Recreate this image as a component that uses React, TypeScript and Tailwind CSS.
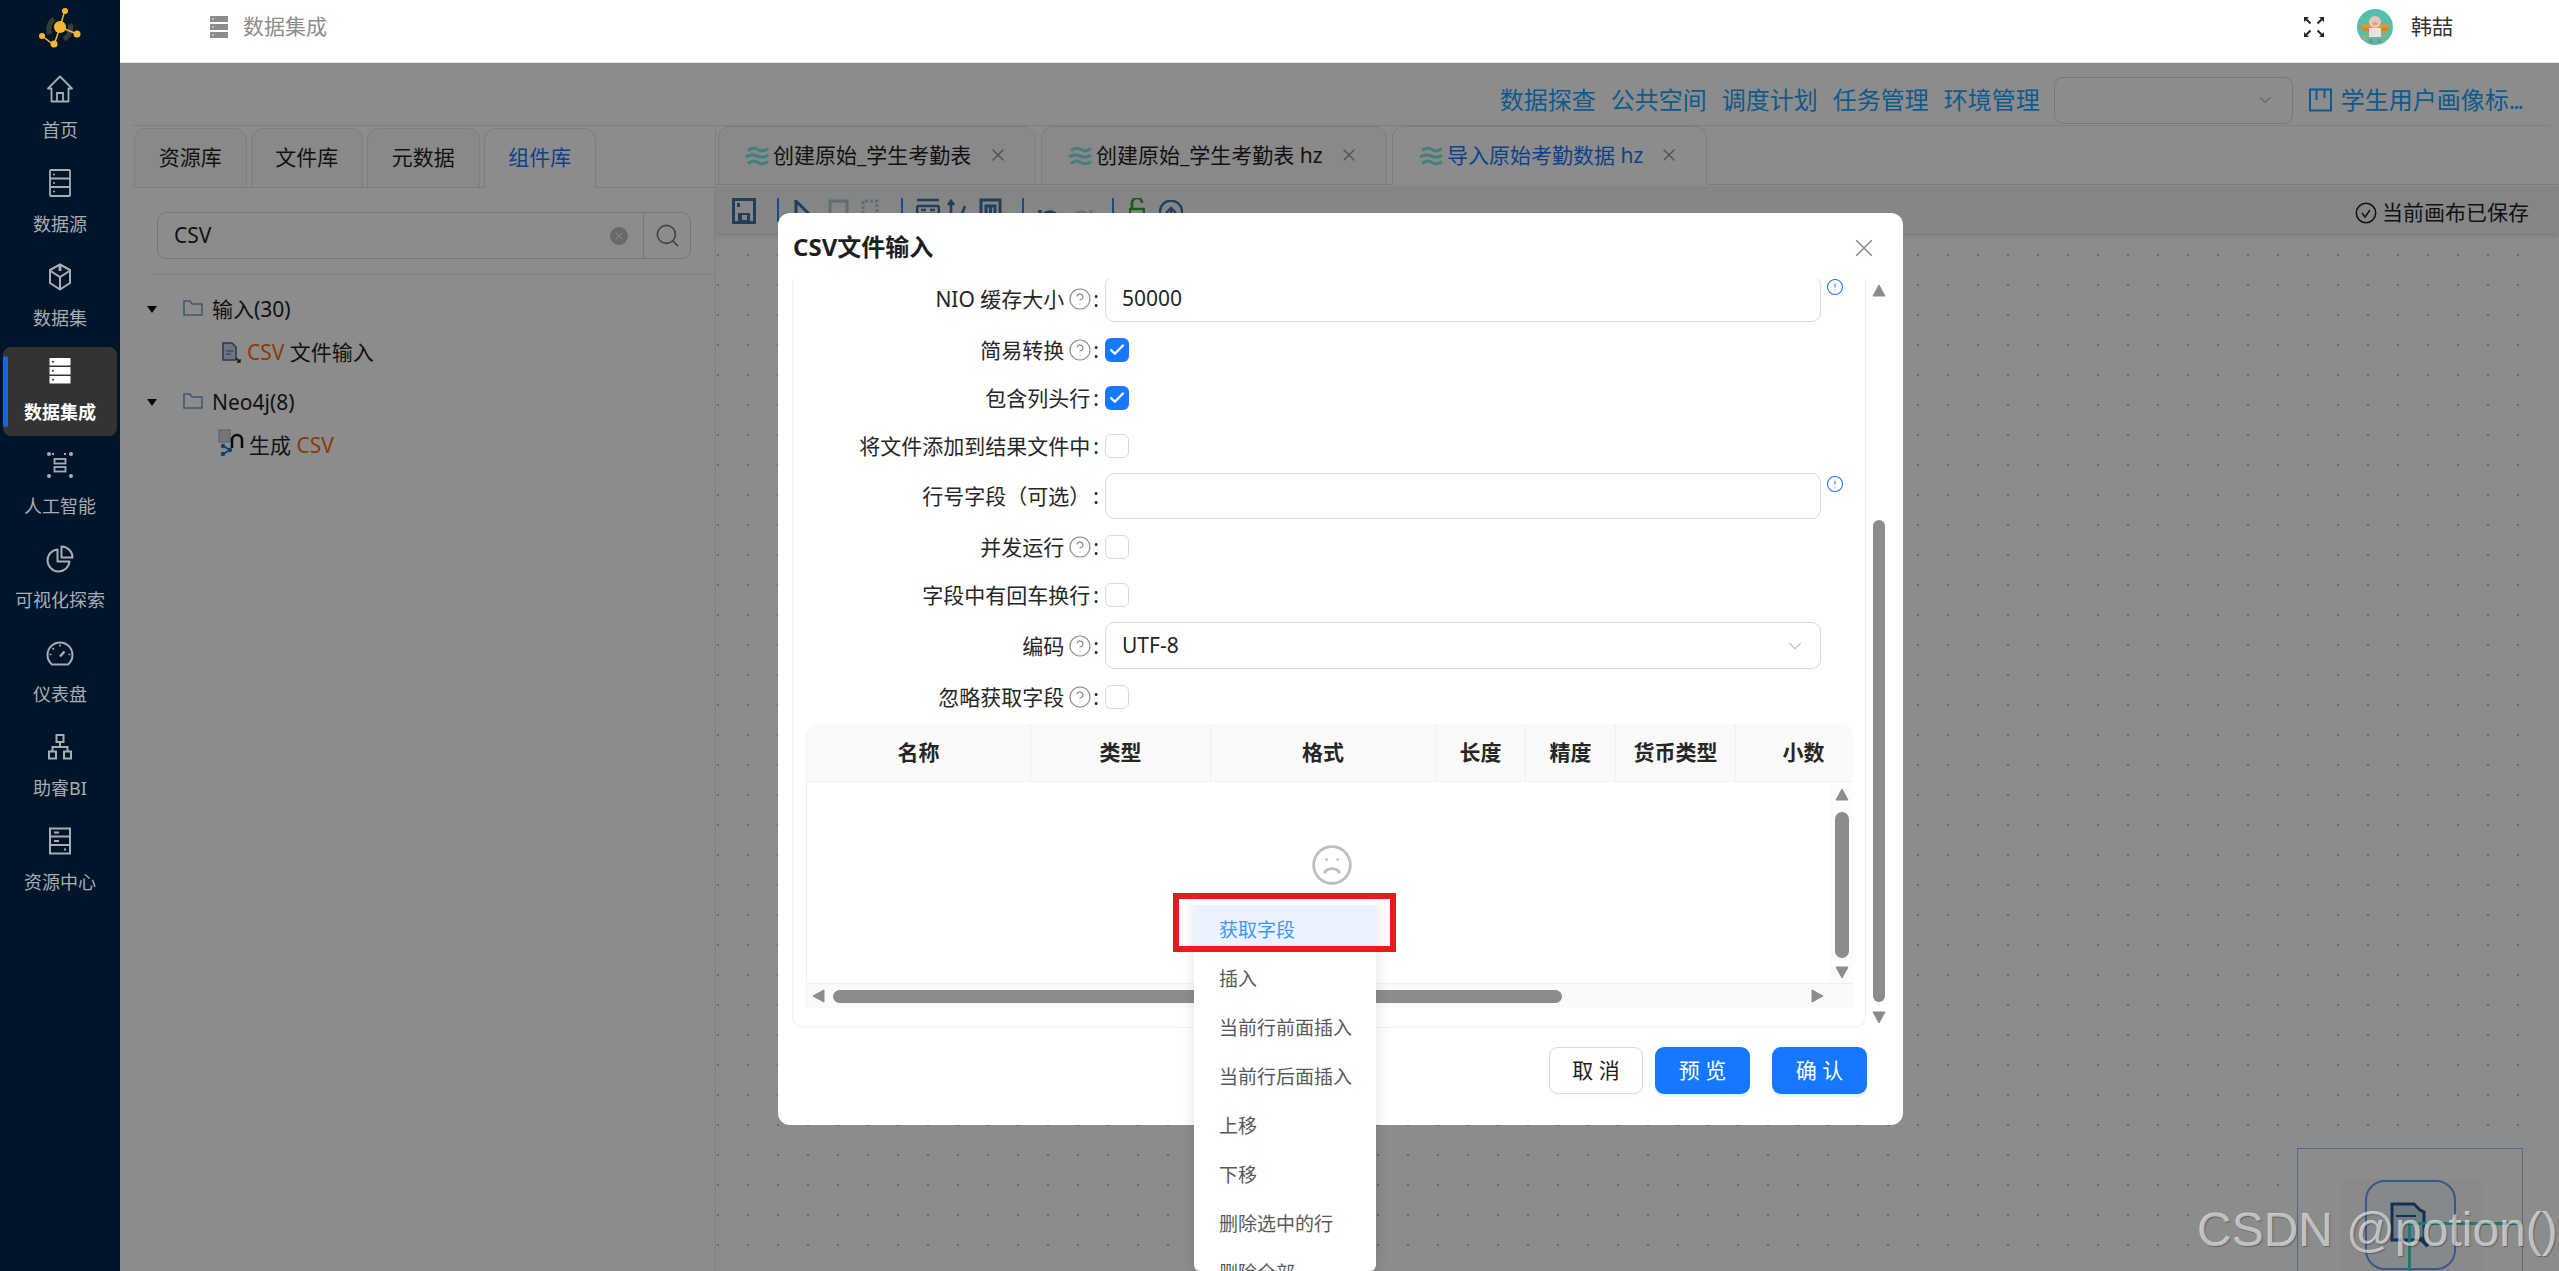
import { Check, ChevronDown, CircleAlert, CircleHelp, Frown, Search, X } from 'lucide-react'
import type { ReactNode } from 'react'

const font = "font-['Noto_Sans','Noto_Sans_CJK_SC',sans-serif]"

// Sidebar icons, drawn to match the product's own line set.
const HomeIcon = () => (
  <svg viewBox="0 0 28 28" className="h-7 w-7" fill="none" stroke="currentColor" strokeWidth="1.8">
    <path d="M14 1.5 2 13.5h3.500V26.500h17V13.500H26Z" strokeLinejoin="round" />
    <path d="M11 26.500V18h6v8.500" />
  </svg>
)
const SourceIcon = () => (
  <svg viewBox="0 0 28 28" className="h-7 w-7" fill="none" stroke="currentColor" strokeWidth="1.800">
    <rect x="4" y="1" width="20" height="26" rx="1" />
    <path d="M4 9.500h20M4 18h20" />
    <path d="M7 5.500h2M7 14h2M7 22.500h2" strokeWidth="1.500" />
  </svg>
)
const BoxIcon = () => (
  <svg viewBox="0 0 28 28" className="h-7 w-7" fill="none" stroke="currentColor" strokeWidth="2">
    <path d="M14 1.500 24 7v13l-10 6.500L4 20V7Z" strokeLinejoin="round" />
    <path d="M4.500 8 14 14l9.500-6M14 14v12" />
    <path d="M14 3v5" strokeWidth="3" />
  </svg>
)
const ActiveIcon = () => (
  <svg viewBox="0 0 28 28" className="h-7 w-7">
    <rect x="3.500" y="1" width="21" height="7.500" rx="0.500" fill="#fff" />
    <rect x="3.500" y="10" width="21" height="7.500" rx="0.500" fill="#fff" />
    <rect x="3.500" y="19" width="21" height="7.500" rx="0.500" fill="#fff" />
    <circle cx="7" cy="4.700" r="1" fill="#333" />
    <circle cx="7" cy="13.700" r="1" fill="#333" />
    <circle cx="7" cy="22.700" r="1" fill="#333" />
  </svg>
)
const AiIcon = () => (
  <svg viewBox="0 0 28 28" className="h-7 w-7" fill="none" stroke="currentColor" strokeWidth="1.800">
    <rect x="8.500" y="8" width="11" height="4.500" />
    <rect x="8.500" y="16" width="11" height="4.500" />
    <g fill="currentColor" stroke="none">
      <circle cx="3" cy="3" r="2" />
      <circle cx="25" cy="3" r="2" />
      <circle cx="3" cy="25" r="2" />
      <circle cx="25" cy="25" r="2" />
    </g>
    <path d="M6 3h4M18 3h4" strokeDasharray="2 9" />
  </svg>
)
const PieIcon = () => (
  <svg viewBox="0 0 28 28" className="h-7 w-7" fill="none" stroke="currentColor" strokeWidth="2">
    <path d="M11.500 4.500a11 11 0 1 0 12 12H11.500Z" strokeLinejoin="round" />
    <path d="M15.500 1.500a11 11 0 0 1 11 11h-11Z" strokeLinejoin="round" />
  </svg>
)
const GaugeIcon = () => (
  <svg viewBox="0 0 28 28" className="h-7 w-7" fill="none" stroke="currentColor" strokeWidth="2">
    <path d="M6 25.500a12.500 12.500 0 1 1 16 0Z" strokeLinejoin="round" />
    <path d="M14 17.500 18.500 12.500" strokeWidth="2.400" />
    <path d="M14 5.500v2M6.500 9l1.500 1.500M3.500 15.500h2M22.500 15.500h2" strokeWidth="1.500" />
  </svg>
)
const OrgIcon = () => (
  <svg viewBox="0 0 28 28" className="h-7 w-7" fill="none" stroke="currentColor" strokeWidth="2">
    <rect x="10.500" y="2" width="7" height="7" />
    <rect x="3" y="18.500" width="7" height="7" />
    <rect x="18" y="18.500" width="7" height="7" />
    <path d="M14 9v5M6.500 18.500V14h15v4.500" />
  </svg>
)
const ResourceIcon = () => (
  <svg viewBox="0 0 28 28" className="h-7 w-7" fill="none" stroke="currentColor" strokeWidth="2">
    <rect x="4" y="1.500" width="20" height="25" />
    <path d="M4 9.500h20M4 18h20M8 5.500h5M8 14h5M18 22.500h2" />
  </svg>
)

const nav: { label: string; icon: ReactNode; active?: boolean }[] = [
  { label: '首页', icon: <HomeIcon /> },
  { label: '数据源', icon: <SourceIcon /> },
  { label: '数据集', icon: <BoxIcon /> },
  { label: '数据集成', icon: <ActiveIcon />, active: true },
  { label: '人工智能', icon: <AiIcon /> },
  { label: '可视化探索', icon: <PieIcon /> },
  { label: '仪表盘', icon: <GaugeIcon /> },
  { label: '助睿BI', icon: <OrgIcon /> },
  { label: '资源中心', icon: <ResourceIcon /> },
]

function Logo() {
  return (
    <svg viewBox="0 0 120 63" className="h-[63px] w-[120px] shrink-0">
      <path d="M50 34a12 12 0 0 1 4-15M70 24a12 12 0 0 1-6 15" fill="none" stroke="#3a3a34" strokeWidth="5" />
      <path d="M65 10 60 27 77 34M60 27 54 45 42 36" fill="none" stroke="#f5b82e" strokeWidth="1.500" />
      <circle cx="60" cy="27" r="6" fill="#f5b82e" />
      <circle cx="65" cy="11" r="3" fill="#f5b82e" />
      <circle cx="77" cy="34" r="3.500" fill="#f5b82e" />
      <circle cx="54" cy="44" r="3.500" fill="#f5b82e" />
      <circle cx="42" cy="36" r="3" fill="#f5b82e" />
    </svg>
  )
}

function Sidebar() {
  return (
    <aside className="flex h-full w-[120px] shrink-0 flex-col bg-[#001529]">
      <Logo />
      {nav.map((n) => (
        <div key={n.label} className="relative flex h-[94px] flex-col items-center pt-3">
          {n.active && (
            <>
              <div className="absolute inset-x-[3px] top-[2px] h-[89px] rounded-lg bg-[#333333]" />
              <div className="absolute left-[3px] top-[11px] h-[71px] w-[5px] rounded-sm bg-[#1668dc]" />
            </>
          )}
          <div className={`relative ${n.active ? 'text-white' : 'text-[#a6adb4]'}`}>{n.icon}</div>
          <div
            className={`relative mt-[15px] text-[18px] leading-6 ${n.active ? 'font-bold text-white' : 'text-[#a6adb4]'}`}
          >
            {n.label}
          </div>
        </div>
      ))}
    </aside>
  )
}

function Avatar() {
  return (
    <svg viewBox="0 0 36 36" className="h-9 w-9">
      <circle cx="18" cy="18" r="18" fill="#55bfae" />
      <rect x="5" y="15" width="26" height="3" fill="#d89a3c" />
      <rect x="5" y="19" width="26" height="3" fill="#c98a30" />
      <rect x="5" y="26" width="26" height="2" fill="#d89a3c" />
      <path d="M12 19h12v9H12Z" fill="#e6e4dc" />
      <circle cx="18" cy="13" r="6" fill="#f0c4b4" />
      <ellipse cx="18" cy="14.500" rx="2.500" ry="1.700" fill="#e09a90" />
      <path d="M12 30h4v4h-4ZM20 30h4v4h-4Z" fill="#8a8a80" />
    </svg>
  )
}

function Header() {
  return (
    <header className="flex h-[63px] shrink-0 items-center border-b border-[#e8e8e8] bg-white pb-[8px] pl-[90px] pr-[106px]">
      <svg viewBox="0 0 18 22" className="h-[22px] w-[18px]">
        <rect y="0" width="18" height="6" fill="#8c8c8c" />
        <rect y="8" width="18" height="6" fill="#8c8c8c" />
        <rect y="16" width="18" height="6" fill="#8c8c8c" />
        <path d="M2 3h1.500M2 11h1.500M2 19h1.500" stroke="#fff" />
      </svg>
      <span className="ml-[15px] text-[21px] text-[#8c8c8c]">数据集成</span>
      <svg viewBox="0 0 22 22" className="ml-auto h-[22px] w-[22px]" fill="none" stroke="#262626" strokeWidth="2">
        <path d="M7.500 7.500 2 2M14.500 7.500 20 2M7.500 14.500 2 20M14.500 14.500 20 20" />
        <path d="M1 1h5L1 6ZM21 1h-5l5 5ZM1 21h5l-5-5ZM21 21h-5l5-5Z" fill="#262626" stroke="none" />
      </svg>
      <div className="ml-[32px]">
        <Avatar />
      </div>
      <span className="ml-[18px] text-[21px] text-[#333333]">韩喆</span>
    </header>
  )
}

function TopLinks() {
  const links = ['数据探查', '公共空间', '调度计划', '任务管理', '环境管理']
  return (
    <div className="ml-3 mr-[10px] flex h-[63px] shrink-0 items-center justify-end gap-[15px] border-b border-[#e8e8e8] pr-[27px] pt-[12px] text-[24px] text-[#1ba4ff]">
      {links.map((l) => (
        <span key={l}>{l}</span>
      ))}
      <div className="ml-[-1px] flex h-[47px] w-[239px] items-center justify-end rounded-[9px] border border-[#d9d9d9] pr-[17px]">
        <ChevronDown size={20} strokeWidth={1.3} className="text-[#bfbfbf]" />
      </div>
      <svg viewBox="0 0 23 24" className="ml-px h-6 w-[23px]" fill="none" stroke="#1ba4ff" strokeWidth="2">
        <rect x="1" y="1.500" width="21" height="21" />
        <path d="M7.500 2v10M15.500 2v8" />
      </svg>
      <span className="ml-[-6px]">
        学生用户画像标<span className="tracking-[-2px]">...</span>
      </span>
    </div>
  )
}

function FolderIcon() {
  return (
    <svg viewBox="0 0 20 16" className="h-4 w-5 shrink-0" fill="none" stroke="#7ea2c4" strokeWidth="1.600">
      <path d="M1 15V1h6l2 3h10v11Z" />
    </svg>
  )
}

function Caret() {
  return (
    <svg viewBox="0 0 10 7" className="h-[7px] w-[10px] shrink-0">
      <path d="M0 0h10L5 7Z" fill="#111" />
    </svg>
  )
}

function LeftPane() {
  const tabs = ['资源库', '文件库', '元数据', '组件库']
  return (
    <section className="ml-3 flex w-[584px] shrink-0 flex-col border-r border-[#ececec]">
      <div className="mt-[2px] flex h-[60px] shrink-0 gap-1 border-b border-[#e5e5e5] pl-[2px]">
        {tabs.map((t, i) => (
          <div
            key={t}
            className={`flex h-[60px] w-[112.500px] items-center justify-center rounded-t-xl border border-[#e5e5e5] text-[21px] ${
              i === 3 ? 'border-b-white bg-white text-[#1677ff]' : 'bg-[#fafafa] text-[#1f1f1f]'
            }`}
          >
            {t}
          </div>
        ))}
      </div>
      <div className="ml-[25px] mt-[24px] flex h-[47px] w-[534px] items-center rounded-[9px] border border-[#d9d9d9]">
        <span className="ml-4 text-[21px] text-[#1f1f1f]">CSV</span>
        <div className="ml-auto mr-[15px] flex h-[18px] w-[18px] items-center justify-center rounded-full bg-[#bfbfbf]">
          <X size={12} strokeWidth={2} className="text-white" />
        </div>
        <div className="flex h-full w-[47px] items-center justify-center border-l border-[#d9d9d9]">
          <Search size={27} strokeWidth={1.400} className="text-[#777777]" />
        </div>
      </div>
      <div className="ml-[17px] mt-[15px] border-t border-[#ececec]" />
      <div className="text-[21px] text-[#1f1f1f]">
        <div className="mt-[13px] flex h-[43px] items-center pl-[15px]">
          <Caret />
          <div className="ml-[26px] mb-[4px]">
            <FolderIcon />
          </div>
          <span className="ml-[9px]">输入(30)</span>
        </div>
        <div className="flex h-[43px] items-center pl-[90px]">
          <svg viewBox="0 0 20 22" className="h-[22px] w-5 shrink-0" fill="none">
            <path d="M1 1h9l4 4v13H1Z" fill="#c4d8ec" stroke="#3f6a94" strokeWidth="1.500" />
            <path d="M4 9h7M4 12h5" stroke="#3f6a94" />
            <path d="M14 16l4 4M18 17v3h-3" stroke="#222" strokeWidth="1.300" />
          </svg>
          <span className="ml-[5px]">
            <span className="text-[#ff6a10]">CSV</span> 文件输入
          </span>
        </div>
        <div className="mt-[7px] flex h-[43px] items-center pl-[15px]">
          <Caret />
          <div className="ml-[26px] mb-[4px]">
            <FolderIcon />
          </div>
          <span className="ml-[9px]">Neo4j(8)</span>
        </div>
        <div className="flex h-[43px] items-center pl-[86px]">
          <svg viewBox="0 0 26 28" className="mb-[6px] h-7 w-[26px] shrink-0" fill="none">
            <rect x="1" y="1" width="11" height="12" fill="#d8d8d8" stroke="#aaaaaa" />
            <path d="M14 19v-8a5 5 0 0 1 10 0v8" stroke="#111" strokeWidth="2.500" />
            <path d="M5 17l7 4-7 4" stroke="#1a78d0" strokeWidth="2" />
            <circle cx="5" cy="17" r="2.200" fill="#1a78d0" />
            <circle cx="12" cy="21" r="2.200" fill="#1a78d0" />
            <circle cx="5" cy="25" r="2.200" fill="#1a78d0" />
          </svg>
          <span className="ml-[5px]">
            生成 <span className="text-[#ff6a10]">CSV</span>
          </span>
        </div>
      </div>
    </section>
  )
}

function Waves() {
  return (
    <svg viewBox="0 0 26 22" className="h-[22px] w-[26px] shrink-0" fill="none" stroke="#7fe8e0" strokeWidth="3.200">
      <path d="M3 5.500c4-3 7-3 10-1s6 2 10-1" />
      <path d="M1 12c4-3 7-3 11-1s7 2 11-1" />
      <path d="M3 18.500c4-3 7-3 10-1s6 2 10-1" />
    </svg>
  )
}

function EditorTabs() {
  const tabs = [
    { t: '创建原始_学生考勤表', w: 'w-[318px]' },
    { t: '创建原始_学生考勤表 hz', w: 'w-[346px]' },
    { t: '导入原始考勤数据 hz', w: 'w-[315px]', active: true },
  ]
  return (
    <div className="flex h-[59px] shrink-0 gap-[5px] border-b border-[#e5e5e5] pl-[2px]">
      {tabs.map((x) => (
        <div
          key={x.t}
          className={`flex h-[59px] ${x.w} items-center rounded-t-xl border border-[#e5e5e5] pl-[26px] pr-[27px] text-[21px] ${
            x.active ? 'border-b-white bg-white text-[#1677ff]' : 'bg-[#fafafa] text-[#1f1f1f]'
          }`}
        >
          <Waves />
          <span className="ml-[2px] whitespace-nowrap">{x.t}</span>
          <X size={20} strokeWidth={1.500} className="mb-[2px] ml-auto shrink-0 text-[#909090]" />
        </div>
      ))}
    </div>
  )
}

const Sep = ({ className }: { className: string }) => (
  <div className={`h-[24px] w-[2px] shrink-0 bg-[#2b8cff] ${className}`} />
)

function Toolbar() {
  const c = '#3f72a8'
  return (
    <div className="relative mt-px flex h-[47px] shrink-0 items-start bg-gradient-to-b from-[#f0f4f2] to-[#f3f6f4] pl-4 pt-[12px] shadow-[0_3px_5px_rgba(0,0,0,0.12)]">
      <svg viewBox="0 0 24 26" className="h-[26px] w-6 shrink-0" fill="none" stroke={c} strokeWidth="3">
        <path d="M1.500 1.500h21v23h-21Z" />
        <rect x="6" y="15" width="12" height="9" fill={c} stroke="none" />
        <rect x="10" y="17" width="5" height="5" fill="#e8eeee" stroke="none" />
        <rect x="5" y="5" width="3" height="4" fill={c} stroke="none" />
      </svg>
      <Sep className="ml-[21px]" />
      <svg viewBox="0 0 23 26" className="ml-[15px] h-[26px] w-[23px] shrink-0" fill="none" stroke={c} strokeWidth="3">
        <path d="M2 2v24M2 3l20 20" />
      </svg>
      <svg viewBox="0 0 21 26" className="ml-[11px] h-[26px] w-[21px] shrink-0" fill="none" stroke="#b8c4d0" strokeWidth="3">
        <path d="M2 26V3h17v23" />
      </svg>
      <svg viewBox="0 0 18 26" className="ml-3 h-[26px] w-[18px] shrink-0" fill="none" stroke="#b8c4d0" strokeWidth="3" strokeDasharray="3 2">
        <path d="M2 26V3h14v23" />
      </svg>
      <Sep className="ml-[22px]" />
      <svg viewBox="0 0 24 26" className="ml-[13px] h-[26px] w-6 shrink-0" fill="none" stroke={c} strokeWidth="2.600">
        <path d="M1 2h22M1 16h22M1 8h22M1 8v8M23 8v8" />
        <path d="M5 12h5M14 12h5" />
      </svg>
      <svg viewBox="0 0 19 26" className="ml-[7px] h-[26px] w-[19px] shrink-0" fill="none" stroke={c} strokeWidth="2.600">
        <path d="M4 26V3M1 7l3-4 3 4M11 26 18 8" />
      </svg>
      <svg viewBox="0 0 23 26" className="ml-[13px] h-[26px] w-[23px] shrink-0" fill="none" stroke={c} strokeWidth="3">
        <path d="M2 26V2h19v24M7 26V8h9v18M11.500 8v18" />
      </svg>
      <Sep className="ml-5" />
      <svg viewBox="0 0 22 26" className="ml-[14px] mt-[6px] h-[26px] w-[22px] shrink-0" fill="none" stroke={c} strokeWidth="3.500">
        <path d="M3 16a9 9 0 0 1 17-3M2 6v10h10" />
      </svg>
      <svg viewBox="0 0 22 26" className="ml-[11px] mt-[6px] h-[26px] w-[22px] shrink-0" fill="none" stroke="#c8c8c8" strokeWidth="3.500">
        <path d="M19 16A9 9 0 0 0 2 13M20 6v10H10" />
      </svg>
      <Sep className="ml-[19px]" />
      <svg viewBox="0 0 16 26" className="ml-[15px] h-[26px] w-4 shrink-0" fill="none" stroke="#2fa82f" strokeWidth="2.600">
        <path d="M3 10V5a5 5 0 0 1 10 0M1 11h14v12H1Z" />
      </svg>
      <svg viewBox="0 0 24 26" className="ml-[14px] mt-[2px] h-[26px] w-6 shrink-0" fill="none" stroke={c} strokeWidth="2.400">
        <path d="M3 18a11 11 0 1 1 18 0M12 8v14M7 13l5-5 5 5" />
      </svg>
      <div className="ml-auto mr-[30px] mt-[-1px] flex items-center gap-[5px] text-[21px] text-[#1f1f1f]">
        <svg viewBox="0 0 22 22" className="h-[22px] w-[22px]" fill="none" stroke="#1f1f1f" strokeWidth="1.500">
          <circle cx="11" cy="11" r="9.700" />
          <path d="M7 11l3 4 5-7" />
        </svg>
        当前画布已保存
      </div>
    </div>
  )
}

function Minimap() {
  return (
    <div className="absolute left-[1581px] top-[915px] h-[200px] w-[226px] border border-[#8ac8ff] bg-white">
      <div className="absolute left-[43px] top-[30px] h-[150px] w-[142px] bg-[#fbfbfb]" />
      <div className="absolute left-[67px] top-[31px] flex h-[90px] w-[91px] items-center justify-center rounded-[20px] border-2 border-[#66a0ff] bg-[#f5faff]">
        <svg viewBox="0 0 42 46" className="h-[46px] w-[42px]" fill="none">
          <path d="M2 2h22l6 6 4 2v28H2Z" fill="#c8e0f0" stroke="#2a5a8a" strokeWidth="3" />
          <path d="M6 14h20" stroke="#2a5a8a" strokeWidth="2" />
          <path d="M30 36l8 8" stroke="#2a5a8a" strokeWidth="4" />
        </svg>
      </div>
      <div className="absolute left-[110px] top-[73px] h-[3px] w-[115px] bg-[#40dac8]" />
      <div className="absolute left-[110px] top-[73px] h-[100px] w-[3px] bg-[#40dac8]" />
    </div>
  )
}

function Canvas() {
  return (
    <div className="relative mr-[29px] flex-1 bg-[radial-gradient(circle,#bcbcbc_1.100px,transparent_1.300px)] bg-[length:30px_30px] bg-[position:-13px_7px]">
      <Minimap />
    </div>
  )
}

function Help() {
  return <CircleHelp size={24} strokeWidth={1.200} className="ml-[4px] mr-[-2px] shrink-0 text-[#8c8c8c]" />
}

function Row({ label, help, children, className }: { label: string; help?: boolean; children: ReactNode; className: string }) {
  return (
    <div className={`flex items-center ${className}`}>
      <div className="flex w-[306px] shrink-0 items-center justify-end whitespace-nowrap text-[21px] leading-6 text-[#262626]">
        {label}
        {help && <Help />}
        <span className="ml-[3px]">:</span>
      </div>
      <div className="ml-[6px] flex items-start">{children}</div>
    </div>
  )
}

function Checkbox({ on }: { on?: boolean }) {
  return on ? (
    <div className="flex h-6 w-6 items-center justify-center rounded-[6px] bg-[#1677ff]">
      <Check size={18} strokeWidth={3} className="text-white" />
    </div>
  ) : (
    <div className="h-6 w-6 rounded-[6px] border border-[#d9d9d9]" />
  )
}

function Input({ value }: { value?: string }) {
  return (
    <div className="flex h-[46px] w-[716px] items-center rounded-[9px] border border-[#d9d9d9] pl-4 text-[21px] text-[#262626]">
      {value}
    </div>
  )
}

function Info() {
  return <CircleAlert size={18} strokeWidth={1.400} className="ml-[5px] mt-[2px] shrink-0 text-[#1677ff]" />
}

function Tri({ dir }: { dir: 'up' | 'down' | 'left' | 'right' }) {
  const d = { up: 'M7 1l6 11H1Z', down: 'M1 1h12L7 12Z', left: 'M12 1v12L1 7Z', right: 'M1 1v12l11-6Z' }[dir]
  return (
    <svg viewBox="0 0 14 14" className="h-[14px] w-[14px] shrink-0">
      <path d={d} fill="#8c8c8c" stroke="#8c8c8c" strokeLinejoin="round" />
    </svg>
  )
}

function FieldsTable() {
  const cols = [
    { t: '名称', w: 'w-[224px]' },
    { t: '类型', w: 'w-[180px]' },
    { t: '格式', w: 'w-[225px]' },
    { t: '长度', w: 'w-[90px]' },
    { t: '精度', w: 'w-[90px]' },
    { t: '货币类型', w: 'w-[120px]' },
    { t: '小数', w: 'w-[136px]' },
  ]
  return (
    <div className="ml-[13px] mt-[15px] w-[1047px] overflow-hidden rounded-t-xl border-l border-[#f0f0f0]">
      <div className="flex h-[58px] border-b border-[#f0f0f0] bg-[#fafafa]">
        {cols.map((c) => (
          <div
            key={c.t}
            className={`flex ${c.w} shrink-0 items-center justify-center border-r border-[#f0f0f0] text-[21px] font-bold text-[#262626]`}
          >
            {c.t}
          </div>
        ))}
      </div>
      <div className="flex h-[202px] border-b border-[#f0f0f0]">
        <div className="flex flex-1 justify-center pl-[26px] pt-[61px]">
          <Frown size={44} strokeWidth={1.500} className="text-[#bfbfbf]" />
        </div>
        <div className="flex w-[23px] flex-col bg-[#fcfcfc] pl-[5px] pt-[6px]">
          <Tri dir="up" />
          <div className="mt-[10px] h-[146px] w-[14px] rounded-full bg-[#8c8c8c]" />
          <div className="mt-[8px]">
            <Tri dir="down" />
          </div>
        </div>
      </div>
      <div className="flex h-[24px] items-center bg-[#fafafa] pl-[5px] pr-[28px]">
        <Tri dir="left" />
        <div className="ml-[7px] h-[13px] w-[729px] rounded-full bg-[#8c8c8c]" />
        <div className="ml-auto">
          <Tri dir="right" />
        </div>
      </div>
    </div>
  )
}

function Menu() {
  const items = ['插入', '当前行前面插入', '当前行后面插入', '上移', '下移', '删除选中的行', '删除全部']
  return (
    <div className="absolute left-[416px] top-[685px] h-[373px] w-[182px] overflow-hidden rounded-[6px] bg-white pt-[7px] shadow-[0_4px_14px_rgba(0,0,0,0.12)]">
      <div className="flex h-[41px] items-center bg-[#e9f2fe] pl-[25px] pt-[10px] text-[19px] text-[#4096ff]">获取字段</div>
      <div className="pt-[9px]">
        {items.map((i) => (
          <div key={i} className="flex h-[49px] items-center pl-[25px] text-[19px] text-[#595959]">
            {i}
          </div>
        ))}
      </div>
    </div>
  )
}

function Dialog() {
  return (
    <div className="absolute left-[778px] top-[213px] z-20 flex h-[912px] w-[1125px] flex-col rounded-xl bg-white">
      <div className="flex h-[66px] shrink-0 items-center justify-between pl-[15px] pr-[24px] pt-[2px]">
        <span className="text-[24px] font-bold text-[#1f1f1f]">CSV文件输入</span>
        <X size={30} strokeWidth={1.200} className="mt-[2px] text-[#8c8c8c]" />
      </div>
      <div className="ml-[14px] flex">
        <div className="h-[749px] w-[1074px] overflow-hidden rounded-b-xl border-x border-b border-[#f0f0f0]">
          <div className="mt-[-3px]">
            <Row label="NIO 缓存大小" help className="">
              <Input value="50000" />
              <Info />
            </Row>
            <Row label="简易转换" help className="mt-4">
              <Checkbox on />
            </Row>
            <Row label="包含列头行" className="mt-6">
              <Checkbox on />
            </Row>
            <Row label="将文件添加到结果文件中" className="mt-6">
              <Checkbox />
            </Row>
            <Row label="行号字段（可选）" className="mt-[15px]">
              <Input />
              <Info />
            </Row>
            <Row label="并发运行" help className="mt-4">
              <Checkbox />
            </Row>
            <Row label="字段中有回车换行" className="mt-6">
              <Checkbox />
            </Row>
            <Row label="编码" help className="mt-[15px]">
              <div className="flex h-[47px] w-[716px] items-center justify-between rounded-[9px] border border-[#d9d9d9] pl-4 pr-[14px] text-[21px] text-[#262626]">
                UTF-8
                <ChevronDown size={22} strokeWidth={1.200} className="text-[#bfbfbf]" />
              </div>
            </Row>
            <Row label="忽略获取字段" help className="mt-4">
              <Checkbox />
            </Row>
            <FieldsTable />
          </div>
        </div>
        <div className="flex h-[749px] w-[24px] flex-col items-center pl-px">
          <div className="mt-[5px]">
            <Tri dir="up" />
          </div>
          <div className="mt-[222px] h-[482px] w-[12px] rounded-full bg-[#8c8c8c]" />
          <div className="mt-[9px]">
            <Tri dir="down" />
          </div>
        </div>
      </div>
      <div className="mt-[19px] flex justify-end gap-3 pr-[36px] text-[21px]">
        <button className="h-[47px] w-[94px] rounded-[9px] border border-[#d9d9d9] bg-white text-[#1f1f1f] shadow-[0_3px_0_rgba(0,0,0,0.02)]">
          取 消
        </button>
        <button className="h-[47px] w-[95px] rounded-[9px] bg-[#1677ff] text-white shadow-[0_3px_0_rgba(5,145,255,0.1)]">
          预 览
        </button>
        <button className="ml-[10px] h-[47px] w-[95px] rounded-[9px] bg-[#1677ff] text-white shadow-[0_3px_0_rgba(5,145,255,0.1)]">
          确 认
        </button>
      </div>
      <Menu />
      <div className="absolute left-[395px] top-[680px] h-[59px] w-[223px] border-[6px] border-[#e81c1c]" />
    </div>
  )
}

export default function App() {
  return (
    <div className={`relative flex h-[1271px] w-[2559px] overflow-hidden bg-white ${font}`}>
      <Sidebar />
      <main className="flex min-w-0 flex-1 flex-col">
        <Header />
        <div className="relative flex min-h-0 flex-1 flex-col">
          <TopLinks />
          <div className="flex min-h-0 flex-1">
            <LeftPane />
            <section className="flex min-w-0 flex-1 flex-col">
              <EditorTabs />
              <Toolbar />
              <Canvas />
            </section>
          </div>
          <div className="absolute inset-0 z-10 bg-black/45" />
        </div>
      </main>
      <Dialog />
      <div className="absolute bottom-[13px] left-[2197px] z-30 whitespace-nowrap font-['Liberation_Sans',sans-serif] text-[48px] leading-[56px] text-white/60 [text-shadow:1px_1px_1px_rgba(0,0,0,0.3)]">
        CSDN @potion()
      </div>
    </div>
  )
}
